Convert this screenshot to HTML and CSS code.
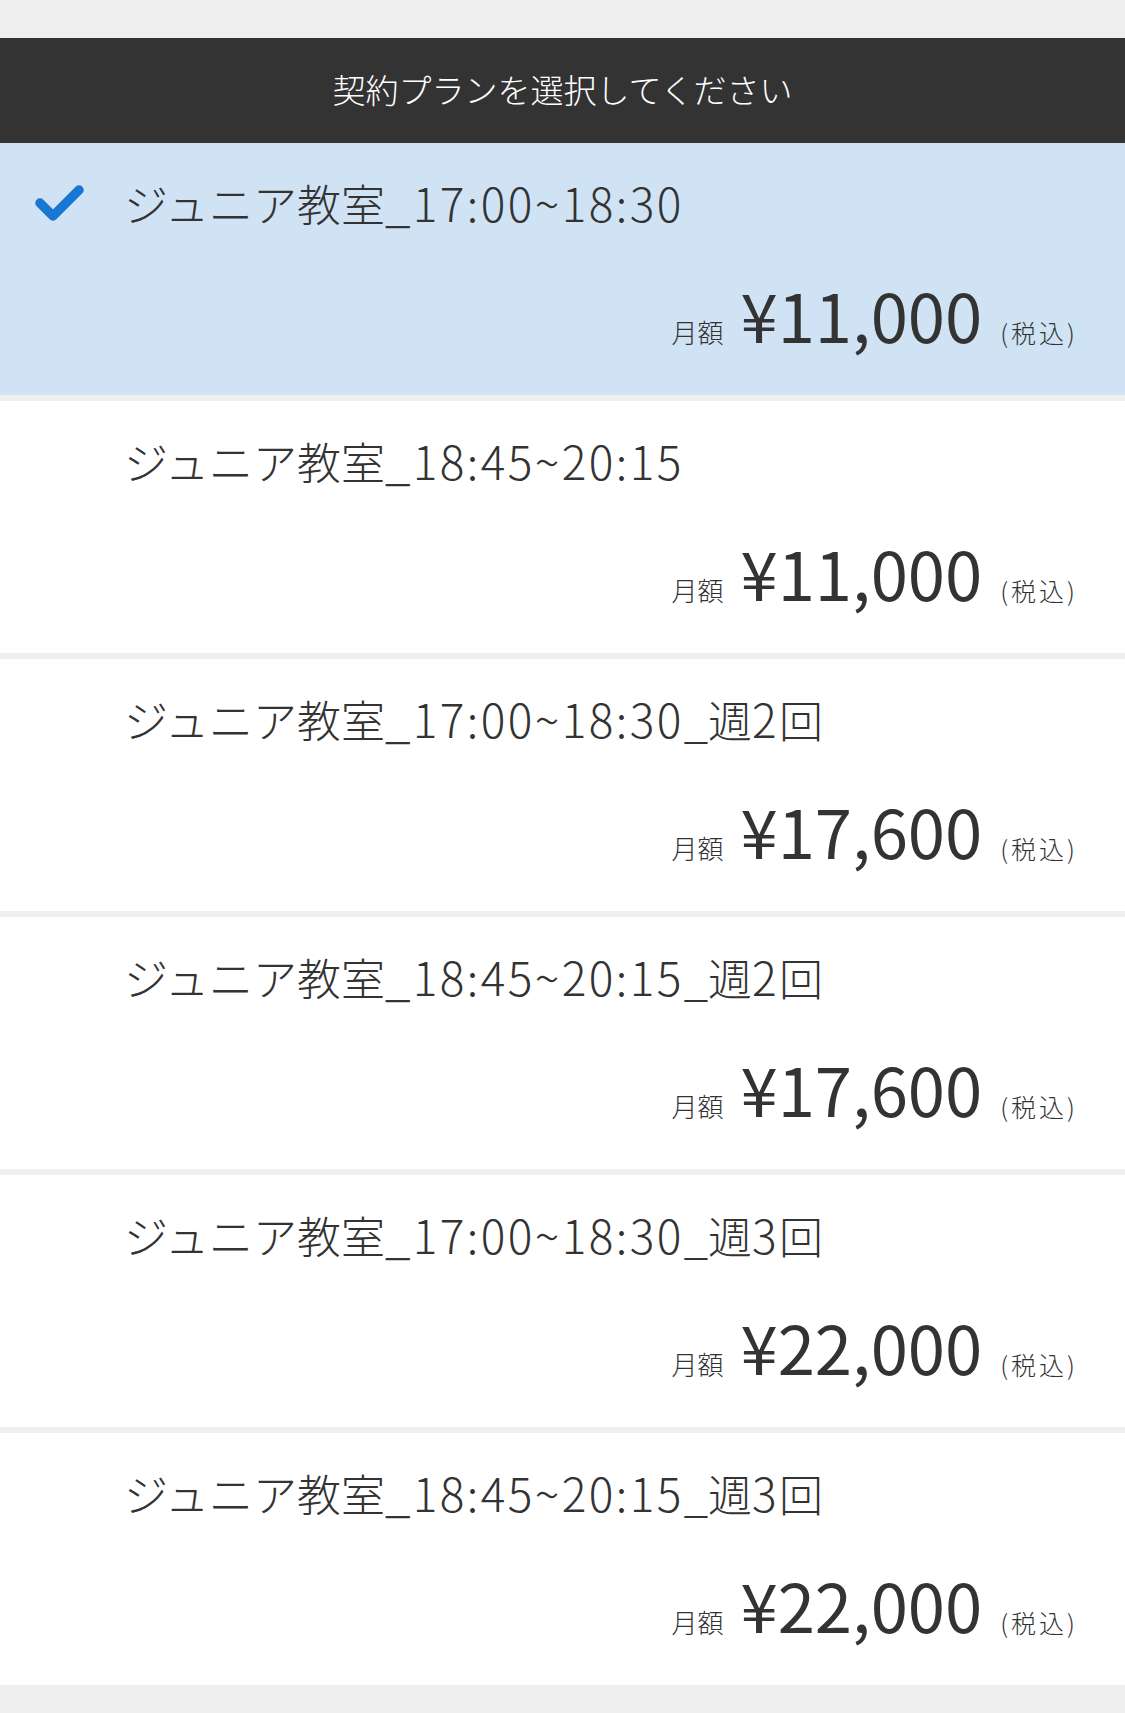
FILE: index.html
```html
<!DOCTYPE html>
<html lang="ja">
<head>
<meta charset="utf-8">
<link rel="stylesheet" href="styles.css">
</head>
<body>
<div class="page">
  <div class="header">契約プランを選択してください</div>
  <ul class="plans">
    <li class="plan selected">
      <div class="title">
        <svg class="check" viewBox="0 0 60 50" width="60" height="50"><path d="M10 24 L23 37 L49 11" fill="none" stroke="#1976d2" stroke-width="9.5" stroke-linecap="round" stroke-linejoin="round"/></svg>
        <span>ジュニア教室<span class="num">_17:00~18:30</span></span>
      </div>
      <div class="price"><span class="label">月額</span><span class="amount">¥11,000</span><span class="tax">(税込)</span></div>
    </li>
    <li class="plan">
      <div class="title"><span>ジュニア教室<span class="num">_18:45~20:15</span></span></div>
      <div class="price"><span class="label">月額</span><span class="amount">¥11,000</span><span class="tax">(税込)</span></div>
    </li>
    <li class="plan">
      <div class="title"><span>ジュニア教室<span class="num">_17:00~18:30</span>_週<span class="num">2</span>回</span></div>
      <div class="price"><span class="label">月額</span><span class="amount">¥17,600</span><span class="tax">(税込)</span></div>
    </li>
    <li class="plan">
      <div class="title"><span>ジュニア教室<span class="num">_18:45~20:15</span>_週<span class="num">2</span>回</span></div>
      <div class="price"><span class="label">月額</span><span class="amount">¥17,600</span><span class="tax">(税込)</span></div>
    </li>
    <li class="plan">
      <div class="title"><span>ジュニア教室<span class="num">_17:00~18:30</span>_週<span class="num">3</span>回</span></div>
      <div class="price"><span class="label">月額</span><span class="amount">¥22,000</span><span class="tax">(税込)</span></div>
    </li>
    <li class="plan">
      <div class="title"><span>ジュニア教室<span class="num">_18:45~20:15</span>_週<span class="num">3</span>回</span></div>
      <div class="price"><span class="label">月額</span><span class="amount">¥22,000</span><span class="tax">(税込)</span></div>
    </li>
  </ul>
</div>
</body>
</html>
```

FILE: styles.css
```css
* { box-sizing: border-box; }
html, body {
  margin: 0;
  padding: 0;
  background: #efefef;
}
body {
  font-family: "Noto Sans CJK JP", "Noto Sans", sans-serif;
  color: #333333;
}
.page {
  padding-top: 38px;
  min-height: 1713px;
}
.header {
  height: 105px;
  background: #333333;
  color: #ffffff;
  font-size: 33px;
  font-weight: 300;
  display: flex;
  align-items: center;
  justify-content: center;
  padding-bottom: 4px;
}
.plans {
  list-style: none;
  margin: 0;
  padding: 0;
  display: flex;
  flex-direction: column;
  gap: 6px;
}
.plan {
  height: 252px;
  background: #ffffff;
  display: flex;
  flex-direction: column;
  justify-content: space-between;
  padding: 36px 50px 48px 124px;
}
.plan.selected {
  background: #d0e3f4;
}
.title {
  position: relative;
  font-size: 44px;
  font-weight: 300;
  line-height: 1;
  display: flex;
  align-items: center;
}
.num {
  font-size: 46px;
  letter-spacing: 2.4px;
}
.check {
  position: absolute;
  left: -94px;
  top: 0;
}
.price {
  display: flex;
  justify-content: flex-end;
  align-items: baseline;
  line-height: 1;
  font-weight: 300;
}
.label {
  font-size: 26px;
  margin-right: 17px;
}
.amount {
  font-size: 67px;
  font-weight: 400;
  font-variant-numeric: proportional-nums;
}
.tax {
  font-size: 25px;
  letter-spacing: 3px;
  margin-left: 18px;
  margin-right: -3px;
}
```
